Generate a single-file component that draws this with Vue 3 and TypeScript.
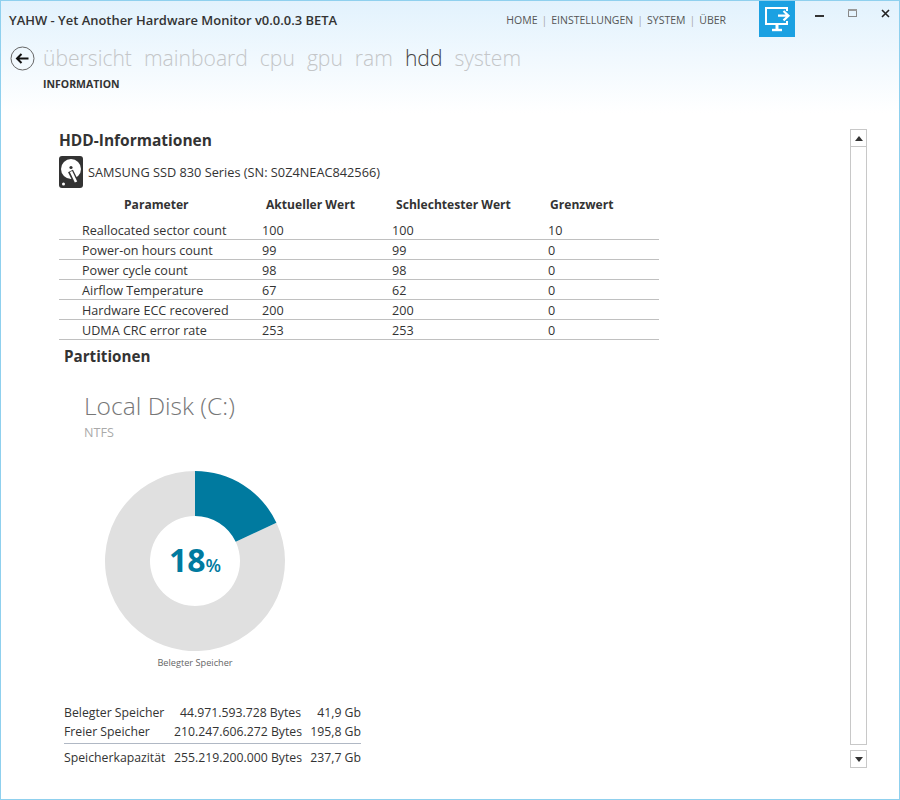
<script setup lang="ts">
const tabs = ['übersicht', 'mainboard', 'cpu', 'gpu', 'ram', 'hdd', 'system']
const links = ['HOME', 'EINSTELLUNGEN', 'SYSTEM', 'ÜBER']
const rows: [string, number, number, number][] = [
  ['Reallocated sector count', 100, 100, 10],
  ['Power-on hours count', 99, 99, 0],
  ['Power cycle count', 98, 98, 0],
  ['Airflow Temperature', 67, 62, 0],
  ['Hardware ECC recovered', 200, 200, 0],
  ['UDMA CRC error rate', 253, 253, 0],
]
const usage = [
  ['Belegter Speicher', '44.971.593.728 Bytes', '41,9 Gb'],
  ['Freier Speicher', '210.247.606.272 Bytes', '195,8 Gb'],
  ['Speicherkapazität', '255.219.200.000 Bytes', '237,7 Gb'],
]
const pct = 18
const a = (pct / 100) * 2 * Math.PI
const px = (r: number) => (r * Math.sin(a)).toFixed(2)
const py = (r: number) => (-r * Math.cos(a)).toFixed(2)
const usedPath = `M0 -90 A90 90 0 0 1 ${px(90)} ${py(90)} L${px(45)} ${py(45)} A45 45 0 0 0 0 -45 Z`
const restPath = `M${px(90)} ${py(90)} A90 90 0 1 1 0 -90 L0 -45 A45 45 0 1 0 ${px(45)} ${py(45)} Z`
</script>

<template>
  <div class="window">
    <header class="head">
      <div class="topbar">
        <div class="title">YAHW - Yet Another Hardware Monitor v0.0.0.3 BETA</div>
        <nav class="links">
          <template v-for="(l, i) in links" :key="l">
            <span v-if="i" class="sep">|</span>
            <span>{{ l }}</span>
          </template>
        </nav>
        <div class="tile">
          <svg width="36" height="36" viewBox="0 0 36 36" fill="none" stroke="#fff" stroke-width="2">
            <path d="M28 10V7H7v16h21v-3" />
            <path d="M18 24v4" stroke-width="3" />
            <path d="M13 29h10" stroke-width="2.4" />
            <path d="M19 14.7h10M24.5 10l5 4.7-5 4.7" stroke-width="2.2" />
          </svg>
        </div>
        <div class="controls">
          <svg width="10" height="10" viewBox="0 0 10 10"><rect x="0" y="6" width="9" height="2" fill="#333" /></svg>
          <svg width="10" height="10" viewBox="0 0 10 10"><rect x="0.5" y="0.5" width="8" height="7" fill="none" stroke="#888" /><rect x="0" y="0" width="9" height="2" fill="#999" /></svg>
          <svg width="10" height="10" viewBox="0 0 10 10"><path d="M1 1l7 7M8 1l-7 7" stroke="#222" stroke-width="1.6" /></svg>
        </div>
      </div>
      <div class="tabsrow">
        <svg class="back" width="25" height="25" viewBox="0 0 25 25" fill="none">
          <circle cx="12.5" cy="12.5" r="11.5" stroke="#666" stroke-width="1" />
          <path d="M18.5 12.5H7M11.5 8L7 12.5l4.5 4.5" stroke="#111" stroke-width="2" />
        </svg>
        <div class="tabs">
          <span v-for="t in tabs" :key="t" :class="{ active: t === 'hdd' }">{{ t }}</span>
        </div>
      </div>
      <div class="sub">INFORMATION</div>
    </header>

    <div class="body">
      <main class="content">
        <h2 class="h1">HDD-Informationen</h2>
        <div class="device">
          <svg width="24" height="32" viewBox="0 0 24 32">
            <rect width="24" height="32" rx="3" fill="#333" />
            <circle cx="12" cy="13" r="10" fill="#fff" />
            <circle cx="12" cy="11.5" r="1.6" fill="#333" />
            <path d="M11.5 15l6 12" stroke="#333" stroke-width="5.5" />
            <path d="M12 15.5l5 10.5" stroke="#fff" stroke-width="2.6" />
            <circle cx="4.5" cy="28" r="1.5" fill="#fff" />
          </svg>
          <span>SAMSUNG SSD 830 Series (SN: S0Z4NEAC842566)</span>
        </div>
        <div class="grid ghead">
          <b class="g1">Parameter</b><b class="g2">Aktueller Wert</b><b class="g2">Schlechtester Wert</b><b class="g4">Grenzwert</b>
        </div>
        <div v-for="r in rows" :key="r[0]" class="grid row">
          <span class="r1">{{ r[0] }}</span><span>{{ r[1] }}</span><span>{{ r[2] }}</span><span>{{ r[3] }}</span>
        </div>
        <h2 class="h2">Partitionen</h2>
        <div class="disk">Local Disk (C:)</div>
        <div class="fs">NTFS</div>
        <div class="donut">
          <svg width="182" height="182" viewBox="-91 -91 182 182">
            <path :d="restPath" fill="#e0e0e0" />
            <path :d="usedPath" fill="#007a9f" />
          </svg>
          <div class="pct">18<small>%</small></div>
        </div>
        <div class="legend">Belegter Speicher</div>
        <div class="usage">
          <div v-for="(u, i) in usage" :key="u[0]" class="urow" :class="{ total: i === 2 }">
            <span>{{ u[0] }}</span><span class="num">{{ u[1] }}</span><span class="num">{{ u[2] }}</span>
          </div>
        </div>
      </main>
      <aside class="scroll">
        <div class="sbtn"><i class="up"></i></div>
        <div class="track"></div>
        <div class="sbtn down"><i class="dn"></i></div>
      </aside>
    </div>
  </div>
</template>

<style>
html, body { margin: 0; }
</style>

<style scoped>
.window {
  width: 900px;
  height: 800px;
  box-sizing: border-box;
  border: 1px solid #8fd0ee;
  background: #fff;
  font-family: "Open Sans", "Noto Sans", sans-serif;
  color: #333;
  display: flex;
  flex-direction: column;
  overflow: hidden;
}
.head {
  height: 112px;
  flex: none;
  background: linear-gradient(#e2f2fd, #ffffff);
}
.topbar {
  display: flex;
  align-items: flex-start;
  height: 36px;
}
.title {
  font-size: 12.95px;
  font-weight: 600;
  color: #333;
  margin: 10px 0 0 8px;
  flex: 1;
  white-space: nowrap;
}
.links {
  display: flex;
  gap: 4px;
  font-size: 10.5px;
  color: #555;
  margin: 12px 33px 0 0;
}
.sep { color: #aaa; }
.tile {
  width: 36px;
  height: 36px;
  background: #1ba1e2;
}
.controls {
  display: flex;
  gap: 23px;
  margin: 8px 0 0 20px;
  width: 84px;
}
.tabsrow {
  display: flex;
  align-items: center;
  margin: 7px 0 0 9px;
  height: 28px;
}
.back { margin: 1px 8px 0 0; }
.tabs {
  display: flex;
  gap: 12px;
  font-size: 21.1px;
  font-weight: 300;
  color: #c4c6c8;
  line-height: 28px;
}
.tabs .active { color: #444; }
.sub {
  font-size: 10.5px;
  font-weight: 700;
  color: #333;
  margin: 5px 0 0 42px;
}
.body {
  flex: 1;
  display: flex;
  min-height: 0;
}
.content {
  flex: 1;
  padding: 17px 0 0 58px;
  font-size: 12.6px;
  min-width: 0;
}
.h1 {
  margin: 0;
  font-size: 15.5px;
  font-weight: 700;
  line-height: 20px;
  color: #333;
}
.device {
  display: flex;
  align-items: center;
  gap: 5px;
  margin-top: 6px;
  height: 32px;
  font-size: 12.75px;
}
.grid {
  width: 600px;
  display: grid;
  grid-template-columns: 203px 130px 156px 111px;
}
.ghead {
  margin-top: 8px;
  height: 24px;
  font-size: 12.1px;
}
.g1 { padding-left: 65px; }
.g2 { padding-left: 4px; }
.g4 { padding-left: 2px; }
.row {
  height: 20px;
  line-height: 21px;
  border-bottom: 1px solid #c0c0c0;
  box-sizing: border-box;
}
.r1 { padding-left: 23px; }
.h2 {
  margin: 6px 0 0 5px;
  font-size: 15.2px;
  font-weight: 700;
  line-height: 21px;
}
.disk {
  margin: 23px 0 0 25px;
  font-size: 24.6px;
  font-weight: 300;
  color: #777;
  line-height: 32px;
}
.fs {
  margin: 3px 0 0 25px;
  font-size: 12.6px;
  color: #aaa;
  line-height: 16px;
}
.donut {
  position: relative;
  width: 182px;
  height: 182px;
  margin: 29px 0 0 45px;
}
.donut svg { display: block; }
.pct {
  position: absolute;
  inset: 0;
  display: flex;
  justify-content: center;
  align-items: baseline;
  font-size: 32px;
  font-weight: 700;
  color: #007a9f;
  line-height: 180px;
}
.pct small {
  font-size: 18px;
  font-weight: 600;
}
.legend {
  width: 182px;
  margin: 4px 0 0 45px;
  text-align: center;
  font-size: 9.2px;
  color: #666;
}
.usage {
  width: 297px;
  margin: 34px 0 0 5px;
  font-size: 12.25px;
}
.urow {
  display: grid;
  grid-template-columns: 110px 127px 60px;
  height: 19px;
  line-height: 19px;
}
.num { text-align: right; white-space: nowrap; }
.total {
  border-top: 1px solid #b0b8c4;
  margin-top: 2px;
  height: 28px;
  line-height: 27px;
}
.scroll {
  width: 17px;
  margin: 16px 32px 31px 0;
  display: flex;
  flex-direction: column;
  flex: none;
}
.sbtn {
  height: 18px;
  box-sizing: border-box;
  border: 1px solid #c8c8c8;
  display: flex;
  align-items: center;
  justify-content: center;
}
.track {
  flex: 1;
  border: 1px solid #c8c8c8;
  border-top: 0;
  margin-bottom: 5px;
}
.up, .dn {
  width: 0;
  height: 0;
  border-left: 4px solid transparent;
  border-right: 4px solid transparent;
}
.up { border-bottom: 5px solid #333; }
.dn { border-top: 5px solid #333; }
</style>
